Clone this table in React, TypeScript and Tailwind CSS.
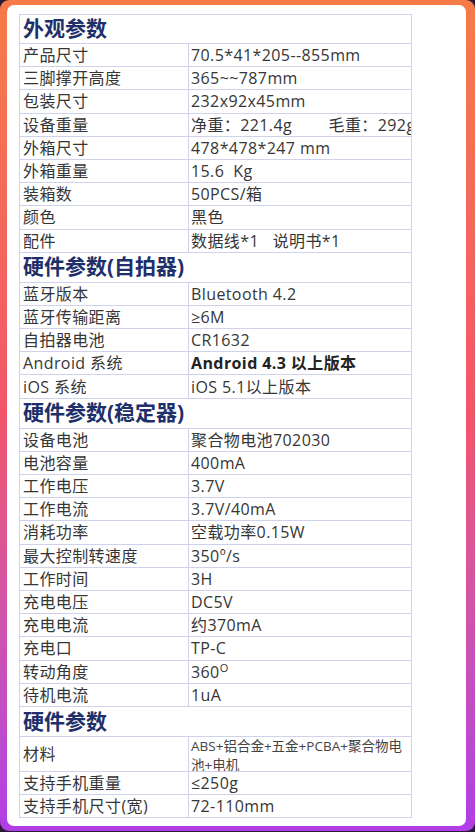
import React from "react";

type Row = { k: React.ReactNode; v: React.ReactNode; bold?: boolean };
type Section = { title: string; h: string; rows: Row[] };

const sections: Section[] = [
  {
    title: "外观参数",
    h: "h-[29px]",
    rows: [
      { k: "产品尺寸", v: "70.5*41*205--855mm" },
      { k: "三脚撑开高度", v: "365~~787mm" },
      { k: "包装尺寸", v: "232x92x45mm" },
      { k: "设备重量", v: "净重：221.4g\u00a0\u00a0\u00a0\u00a0\u00a0\u00a0\u00a0\u00a0毛重：292g" },
      { k: "外箱尺寸", v: "478*478*247 mm" },
      { k: "外箱重量", v: "15.6\u00a0\u00a0Kg" },
      { k: "装箱数", v: "50PCS/箱" },
      { k: "颜色", v: "黑色" },
      { k: "配件", v: "数据线*1\u00a0\u00a0\u00a0说明书*1" },
    ],
  },
  {
    title: "硬件参数(自拍器)",
    h: "h-[30px]",
    rows: [
      { k: "蓝牙版本", v: "Bluetooth 4.2" },
      { k: "蓝牙传输距离", v: "≥6M" },
      { k: "自拍器电池", v: "CR1632" },
      { k: "Android 系统", v: "Android 4.3 以上版本", bold: true },
      { k: "iOS 系统", v: "iOS 5.1以上版本" },
    ],
  },
  {
    title: "硬件参数(稳定器)",
    h: "h-[30px]",
    rows: [
      { k: "设备电池", v: "聚合物电池702030" },
      { k: "电池容量", v: "400mA" },
      { k: "工作电压", v: "3.7V" },
      { k: "工作电流", v: "3.7V/40mA" },
      { k: "消耗功率", v: "空载功率0.15W" },
      { k: "最大控制转速度", v: "350º/s" },
      { k: "工作时间", v: "3H" },
      { k: "充电电压", v: "DC5V" },
      { k: "充电电流", v: "约370mA" },
      { k: "充电口", v: "TP-C" },
      {
        k: "转动角度",
        v: (
          <span>
            360<span className="relative top-[-6px] text-[11px]">O</span>
          </span>
        ),
      },
      { k: "待机电流", v: "1uA" },
    ],
  },
];

const B = "border-[#cfd2ea]";

function DataRow({ r }: { r: Row }) {
  return (
    <div className={`flex h-[23.2px] border-b ${B}`}>
      <div className={`w-[169px] shrink-0 border-r ${B} pl-[3px] flex items-center whitespace-nowrap`}>
        {r.k}
      </div>
      <div
        className={`flex-1 pl-[2px] flex items-center whitespace-nowrap overflow-hidden ${
          r.bold ? "font-bold text-[#222]" : ""
        }`}
      >
        {r.v}
      </div>
    </div>
  );
}

function Header({ title, h }: { title: string; h: string }) {
  return (
    <div
      className={`${h} border-b ${B} pl-[3px] flex items-center text-[21px] font-bold tracking-normal text-[#1e2f69]`}
    >
      {title}
    </div>
  );
}

export default function App() {
  return (
    <div className="w-[475px] h-[832px] bg-[#2a1a3a]">
      <div className="w-[475px] h-[831px] rounded-[9px] pt-[5px] pl-[7px] pr-[9px] pb-[5px] bg-gradient-to-b from-[#f67b46] via-[#f2556a] to-[#b03de6]">
        <div className="w-full h-full bg-white rounded-[7px] pt-[9px] pl-[12px]">
          <div
            className={`w-[393px] border-t border-l border-r ${B} text-[16px] tracking-[0.4px] text-[#363636] overflow-hidden`}
            style={{ fontFamily: '"Open Sans", "Noto Sans CJK SC", sans-serif' }}
          >
            {sections.map((s) => (
              <div key={s.title}>
                <Header title={s.title} h={s.h} />
                {s.rows.map((r, i) => (
                  <DataRow key={i} r={r} />
                ))}
              </div>
            ))}
            <Header title="硬件参数" h="h-[30px]" />
            <div className={`flex h-[35px] border-b ${B}`}>
              <div className={`w-[169px] shrink-0 border-r ${B} pl-[3px] flex items-center`}>材料</div>
              <div className="flex-1 pl-[2px] overflow-hidden text-[13.5px] tracking-normal leading-[19px] text-[#444]">
                ABS+铝合金+五金+PCBA+聚合物电池+电机
              </div>
            </div>
            <DataRow r={{ k: "支持手机重量", v: "≤250g" }} />
            <DataRow r={{ k: "支持手机尺寸(宽)", v: "72-110mm" }} />
          </div>
        </div>
      </div>
    </div>
  );
}
